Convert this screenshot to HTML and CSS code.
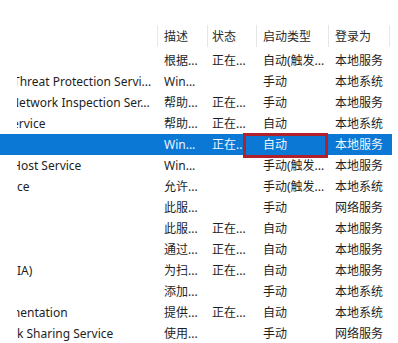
FILE: index.html
```html
<!DOCTYPE html>
<html lang="zh-CN">
<head>
<meta charset="utf-8">
<title>服务</title>
<link rel="stylesheet" href="styles.css">
</head>
<body>
<div class="list">
  <div class="row head">
    <div class="c name"></div>
    <div class="c desc">描述</div>
    <div class="c stat">状态</div>
    <div class="c type">启动类型</div>
    <div class="c login">登录为</div>
    <div class="c tail"></div>
  </div>
  <div class="row"><div class="c name"></div><div class="c desc">根据...</div><div class="c stat">正在...</div><div class="c type">自动(触发...</div><div class="c login">本地服务</div><div class="c tail"></div></div>
  <div class="row"><div class="c name"><div class="clip"><span>Threat Protection Servi...</span></div></div><div class="c desc">Win...</div><div class="c stat"></div><div class="c type">手动</div><div class="c login">本地系统</div><div class="c tail"></div></div>
  <div class="row"><div class="c name"><div class="clip"><span class="deeper">Network Inspection Ser...</span></div></div><div class="c desc">帮助...</div><div class="c stat">正在...</div><div class="c type">手动</div><div class="c login">本地服务</div><div class="c tail"></div></div>
  <div class="row"><div class="c name"><div class="clip"><span class="deep">ervice</span></div></div><div class="c desc">帮助...</div><div class="c stat">正在...</div><div class="c type">自动</div><div class="c login">本地系统</div><div class="c tail"></div></div>
  <div class="row sel"><div class="c name"></div><div class="c desc">Win...</div><div class="c stat">正在...</div><div class="c type">自动</div><div class="c login">本地服务</div><div class="c tail"></div></div>
  <div class="row"><div class="c name"><div class="clip"><span class="deep">Host Service</span></div></div><div class="c desc">Win...</div><div class="c stat"></div><div class="c type">手动(触发...</div><div class="c login">本地服务</div><div class="c tail"></div></div>
  <div class="row"><div class="c name"><div class="clip"><span class="full">ce</span></div></div><div class="c desc">允许...</div><div class="c stat"></div><div class="c type">手动(触发...</div><div class="c login">本地系统</div><div class="c tail"></div></div>
  <div class="row"><div class="c name"></div><div class="c desc">此服...</div><div class="c stat"></div><div class="c type">手动</div><div class="c login">网络服务</div><div class="c tail"></div></div>
  <div class="row"><div class="c name"></div><div class="c desc">此服...</div><div class="c stat">正在...</div><div class="c type">自动</div><div class="c login">本地服务</div><div class="c tail"></div></div>
  <div class="row"><div class="c name"></div><div class="c desc">通过...</div><div class="c stat">正在...</div><div class="c type">自动</div><div class="c login">本地服务</div><div class="c tail"></div></div>
  <div class="row"><div class="c name"><div class="clip"><span class="full">IA)</span></div></div><div class="c desc">为扫...</div><div class="c stat">正在...</div><div class="c type">自动</div><div class="c login">本地服务</div><div class="c tail"></div></div>
  <div class="row"><div class="c name"></div><div class="c desc">添加...</div><div class="c stat"></div><div class="c type">手动</div><div class="c login">本地系统</div><div class="c tail"></div></div>
  <div class="row"><div class="c name"><div class="clip"><span class="deepest">mentation</span></div></div><div class="c desc">提供...</div><div class="c stat">正在...</div><div class="c type">自动</div><div class="c login">本地系统</div><div class="c tail"></div></div>
  <div class="row"><div class="c name"><div class="clip"><span class="full">k Sharing Service</span></div></div><div class="c desc">使用...</div><div class="c stat"></div><div class="c type">手动</div><div class="c login">网络服务</div><div class="c tail"></div></div>
  <div class="mark"></div>
</div>
</body>
</html>
```

FILE: styles.css
```css
html, body {
  margin: 0;
  padding: 0;
  background: #ffffff;
}
body {
  width: 398px;
  height: 343px;
  overflow: hidden;
  font-family: "Noto Sans", "Noto Sans CJK SC", sans-serif;
  font-size: 12px;
  color: #1e1e1e;
}
.list {
  position: relative;
  padding-top: 25px;
}
.row {
  display: grid;
  grid-template-columns: 157px 50px 49px 72px 61px 3px;
  width: 392px;
  height: 21px;
  line-height: 21px;
}
.row.head {
  height: 25px;
  line-height: 23px;
}
.c {
  white-space: nowrap;
  overflow: hidden;
}
.name {
  padding-left: 17px;
}
.clip {
  overflow: hidden;
}
.clip span {
  display: block;
  margin-left: -4px;
}
.clip span.deep {
  margin-left: -5px;
}
.clip span.deeper {
  margin-left: -7px;
}
.clip span.deepest {
  margin-left: -8px;
}
.clip span.full {
  margin-left: 0;
}
.desc { padding-left: 7px; }
.stat { padding-left: 5px; }
.type { padding-left: 7px; }
.login { padding-left: 7px; }
.head .c {
  height: 22px;
  color: #2a2a2a;
}
.head .desc, .head .stat, .head .type, .head .login, .head .tail {
  border-left: 1px solid #e6e6e6;
}
.head .desc { padding-left: 6px; }
.head .stat { padding-left: 4px; }
.head .type { padding-left: 6px; }
.head .login { padding-left: 6px; }
.row.sel {
  background: #0a78d4;
  color: #eef5fc;
}
.mark {
  position: absolute;
  left: 243px;
  top: 133px;
  width: 79px;
  height: 19px;
  border: 3px solid #b0212b;
}
```
